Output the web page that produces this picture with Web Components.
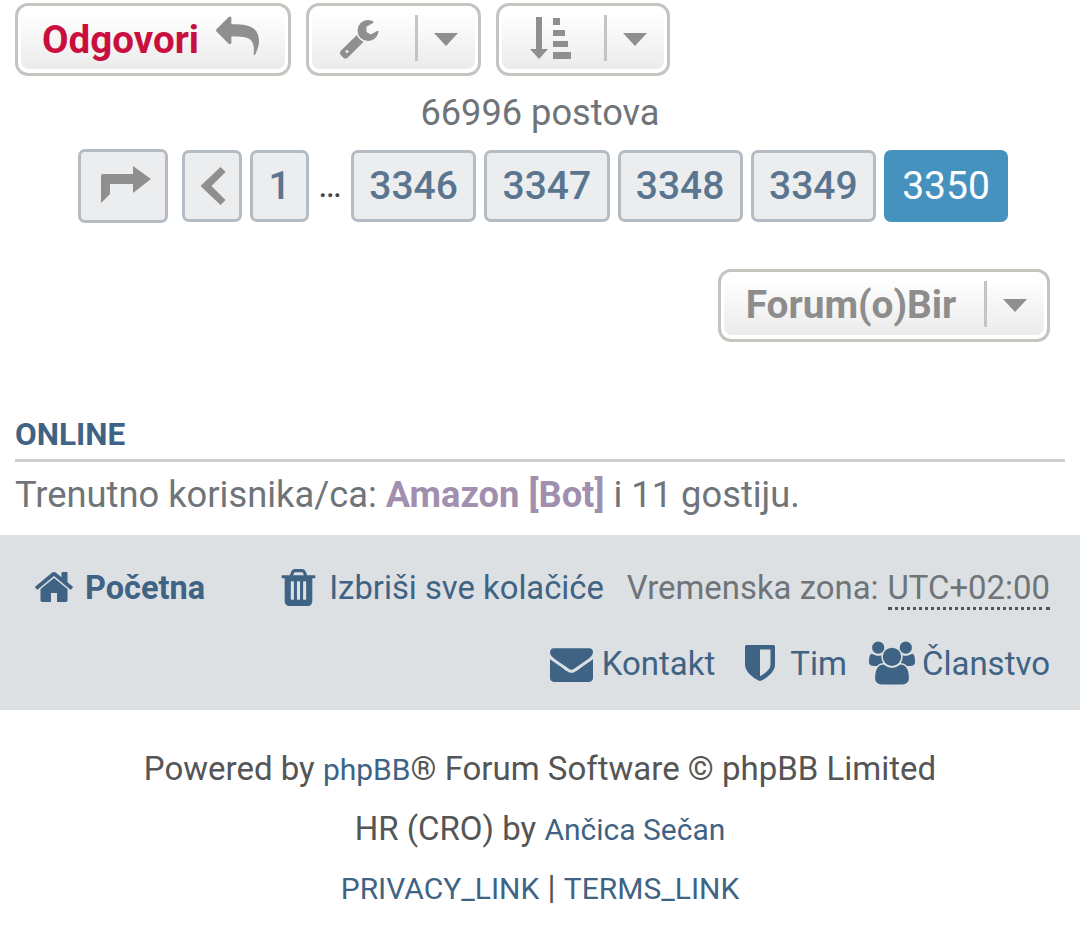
<!DOCTYPE html>
<html lang="hr">
<head>
<meta charset="utf-8">
<title>Forum</title>
<style>
  html, body { margin: 0; background: #fff; }
  body { font-family: Roboto, "Liberation Sans", sans-serif; color: #6b7280; width: 1080px; height: 946px; overflow: hidden; }
</style>
</head>
<body>
<topic-page>
  <action-bar>
    <forum-button style="width:276px" wide>
      <span style="color:#c90f3e;font-weight:700;font-size:38.5px;margin-left:1px">Odgovori</span>
      <fa-icon name="reply" size="43" style="margin-left:17px;margin-top:-6px"></fa-icon>
    </forum-button>
    <forum-button style="width:175px" caret>
      <fa-icon name="wrench" size="42" style="margin:-3px 0 0 -4px"></fa-icon>
    </forum-button>
    <forum-button style="width:174px" caret>
      <fa-icon name="sort" size="44" style="margin:-4px 0 0 -2px"></fa-icon>
    </forum-button>
  </action-bar>

  <post-count>66996 postova</post-count>

  <page-nav>
    <page-link jump><fa-icon name="jump" size="50" style="margin:-3px 0 0 5px"></fa-icon></page-link>
    <page-link icon><fa-icon name="prev" size="38" style="margin-left:1px"></fa-icon></page-link>
    <page-link small>1</page-link>
    <page-dots>…</page-dots>
    <page-link>3346</page-link>
    <page-link>3347</page-link>
    <page-link>3348</page-link>
    <page-link>3349</page-link>
    <page-link active>3350</page-link>
  </page-nav>

  <jump-row>
    <forum-button style="width:332px" caret tight>
      <span style="color:#8d8d8d;font-weight:700;font-size:38.8px">Forum(o)Bir</span>
    </forum-button>
  </jump-row>

  <online-box heading="ONLINE">
    Trenutno korisnika/ca: <b>Amazon [Bot]</b> i 11 gostiju.
  </online-box>

  <nav-footer>
    <foot-link slot="left" icon="home" strong>Početna</foot-link>
    <foot-link slot="left" icon="trash" style="margin-left:72px">Izbriši sve kolačiće</foot-link>
    <time-zone slot="left"></time-zone>
    <foot-link slot="right" icon="envelope" style="font-size:33px">Kontakt</foot-link>
    <foot-link slot="right" icon="shield" style="font-size:33px">Tim</foot-link>
    <foot-link slot="right" icon="group" style="font-size:33px;margin-left:-2px">Članstvo</foot-link>
  </nav-footer>

  <copy-right></copy-right>
</topic-page>

<script>
const ICONS = {
  reply: ['0 0 1792 1792', 'M1792 1120q0 166-127 451-3 7-10.5 24t-13.5 30-13 22q-12 17-28 17-15 0-23.5-10t-8.5-25q0-9 2.5-26.5t2.5-23.5q5-68 5-123 0-101-17.5-181t-48.5-138.5-80-101-105.5-69.5-133-42.5-154-21.5-175.5-6h-224v256q0 26-19 45t-45 19-45-19l-512-512q-19-19-19-45t19-45l512-512q19-19 45-19t45 19 19 45v256h224q713 0 875 403 53 134 53 333z'],
  wrench: ['0 0 1792 1792', 'M448 1472q0-26-19-45t-45-19-45 19-19 45 19 45 45 19 45-19 19-45zm644-420l-682 682q-37 37-90 37-52 0-91-37l-106-108q-38-36-38-90 0-53 38-91l681-681q39 98 114.5 173.5t173.5 114.5zm634-435q0 39-23 106-47 134-164.5 217.5t-258.5 83.5q-185 0-316.5-131.5t-131.5-316.5 131.5-316.5 316.5-131.5q58 0 121.5 16.5t107.5 46.5q16 11 16 28t-16 28l-293 169v224l193 107q5-3 79-48.5t135.5-81 70.5-35.5q15 0 23.5 10t8.5 25z'],
  sort: ['0 0 44 44', 'M9 1h6v32h6l-9 10-9-10h6zM26 2h7v7h-7zM26 14h12v6H26zM26 25h15v6H26zM26 36h19v7H26z'],
  jump: ['0 0 50 50', 'M0 43V16q0-2 2-2h30V6l18 13-18 14v-9H9v10z'],
  prev: ['0 0 25 38', 'M20 0l5 5-14 14 14 14-5 5L0 19z'],
  home: ['0 0 1792 1792', 'M1472 992v480q0 26-19 45t-45 19h-384v-384h-256v384h-384q-26 0-45-19t-19-45v-480q0-1 .5-3t.5-3l575-474 575 474q1 2 1 6zm223-69l-62 74q-8 9-21 11h-3q-13 0-21-7l-692-577-692 577q-12 8-24 7-13-2-21-11l-62-74q-8-10-7-23.5t11-21.5l719-599q32-26 76-26t76 26l244 204v-195q0-14 9-23t23-9h192q14 0 23 9t9 23v408l219 182q10 8 11 21.5t-7 23.5z'],
  trash: ['0 0 1792 1792', 'M704 1376v-704q0-14-9-23t-23-9h-64q-14 0-23 9t-9 23v704q0 14 9 23t23 9h64q14 0 23-9t9-23zm256 0v-704q0-14-9-23t-23-9h-64q-14 0-23 9t-9 23v704q0 14 9 23t23 9h64q14 0 23-9t9-23zm256 0v-704q0-14-9-23t-23-9h-64q-14 0-23 9t-9 23v704q0 14 9 23t23 9h64q14 0 23-9t9-23zm-544-992h448l-48-117q-7-9-17-11h-317q-10 2-17 11zm928 32v64q0 14-9 23t-23 9h-96v948q0 83-47 143.5t-113 60.5h-832q-66 0-113-58.5t-47-141.5v-952h-96q-14 0-23-9t-9-23v-64q0-14 9-23t23-9h309l70-167q15-37 54-63t79-26h320q40 0 79 26t54 63l70 167h309q14 0 23 9t9 23z'],
  envelope: ['0 0 1792 1792', 'M1792 710v794q0 66-47 113t-113 47h-1472q-66 0-113-47t-47-113v-794q44 49 101 87 362 246 497 345 57 42 92.5 65.5t94.5 48 110 24.5h2q51 0 110-24.5t94.5-48 92.5-65.5q170-123 498-345 57-39 100-87zm0-294q0 79-49 151t-122 123q-376 261-468 325-10 7-42.5 30.5t-54 38-52 32.5-57.5 27-50 9h-2q-23 0-50-9t-57.5-27-52-32.5-54-38-42.5-30.5q-91-64-262-182.5t-205-142.5q-62-42-117-115.5t-55-136.5q0-78 41.5-130t118.5-52h1472q65 0 112.5 47t47.5 113z'],
  shield: ['0 0 1792 1792', 'M1344 960v-640h-448v1137q119-63 213-137 235-184 235-360zm192-768v768q0 86-33.5 170.5t-83 150-118 127.5-126.5 103-121 77.5-89.5 49.5-42.5 20q-12 6-26 6t-26-6q-16-7-42.5-20t-89.5-49.5-121-77.5-126.5-103-118-127.5-83-150-33.5-170.5v-768q0-26 19-45t45-19h1152q26 0 45 19t19 45z'],
  group: ['0 0 1920 1792', 'M593 896q-162 5-265 128h-134q-82 0-138-40.5t-56-118.5q0-353 124-353 6 0 43.5 21t97.5 42.5 119 21.5q67 0 133-23-5 37-5 66 0 139 81 256zm1071 637q0 120-73 189.5t-194 69.5h-874q-121 0-194-69.5t-73-189.5q0-53 3.5-103.5t14-109 26.5-108.5 43-97.5 62-81 85.5-53.5 111.5-20q10 0 43 21.5t73 48 107 48 135 21.5 135-21.5 107-48 73-48 43-21.5q61 0 111.5 20t85.5 53.5 62 81 43 97.5 26.5 108.5 14 109 3.5 103.5zm-1024-1277q0 106-75 181t-181 75-181-75-75-181 75-181 181-75 181 75 75 181zm704 384q0 159-112.5 271.5t-271.5 112.5-271.5-112.5-112.5-271.5 112.5-271.5 271.5-112.5 271.5 112.5 112.5 271.5zm576 225q0 78-56 118.5t-138 40.5h-134q-103-123-265-128 81-117 81-256 0-29-5-66 66 23 133 23 59 0 119-21.5t97.5-42.5 43.5-21q124 0 124 353zm-128-609q0 106-75 181t-181 75-181-75-75-181 75-181 181-75 181 75 75 181z']
};

// small helper, every element here is just a shadow root with a style + markup
function defineEl(tag, html) {
  customElements.define(tag, class extends HTMLElement {
    constructor() {
      super();
      this.attachShadow({ mode: 'open' });
    }
    connectedCallback() {
      this.shadowRoot.innerHTML = typeof html === 'function' ? html(this) : html;
    }
  });
}

defineEl('fa-icon', el => {
  const [box, d] = ICONS[el.getAttribute('name')];
  const size = el.getAttribute('size') || 32;
  return `
    <style>
      :host { display: inline-flex; flex: none; color: inherit; }
      svg { display: block; fill: currentColor; }
    </style>
    <svg width="${size}" height="${size}" viewBox="${box}"><path d="${d}"/></svg>`;
});

defineEl('topic-page', `
  <style>:host { display: block; }</style>
  <slot></slot>`);

defineEl('action-bar', `
  <style>
    :host { display: flex; gap: 15px; padding: 3px 15px 0; color: #8f8f8f; }
  </style>
  <slot></slot>`);

defineEl('forum-button', el => `
  <style>
    :host {
      display: flex; box-sizing: border-box; height: 73px;
      border: 3px solid #c7c3bf; border-radius: 13px;
      background: #fff; padding: 0 3px 4px;
      color: #8f8f8f;
    }
    .face {
      flex: 1; display: flex; align-items: center; justify-content: center;
      border-radius: 8px;
      background: linear-gradient(#fff 10%, #ebebeb);
      min-width: 0;
    }
    .main { flex: 1; display: flex; align-items: center; justify-content: center; padding: ${el.hasAttribute('tight') ? 2 : 4}px 6px 0 0; }
    .sep { width: 3px; height: 46px; background: #c7c3bf; flex: none; }
    .caret { box-sizing: border-box; width: 57px; flex: none; display: flex; justify-content: center; padding: 3px 2px 0 0; }
    .caret i { width: 0; height: 0; border: 12px solid transparent; border-top: 13px solid #8f8f8f; border-bottom: 0; }
  </style>
  <div class="face">
    <div class="main"><slot></slot></div>
    ${el.hasAttribute('caret') ? '<div class="sep"></div><div class="caret"><i></i></div>' : ''}
  </div>`);

defineEl('post-count', `
  <style>
    :host { display: block; text-align: center; font-size: 36.2px; line-height: 42px; margin-top: 16px; color: #6f7479; }
  </style>
  <slot></slot>`);

defineEl('page-nav', `
  <style>
    :host { display: flex; justify-content: center; align-items: center; gap: 8px; margin-top: 15px; padding-left: 6px; height: 74px; }
  </style>
  <slot></slot>`);

defineEl('page-dots', `
  <style>
    :host { display: block; width: 26px; text-align: center; color: #444; font-size: 35px; line-height: 40px; }
  </style>
  <slot></slot>`);

defineEl('page-link', el => {
  const active = el.hasAttribute('active');
  const jump = el.hasAttribute('jump');
  const icon = el.hasAttribute('icon');
  const small = el.hasAttribute('small');
  let w = active ? 124 : 125.25;
  if (small) w = 59;
  if (icon) w = 60;
  if (jump) w = 90;
  return `
  <style>
    :host {
      display: flex; align-items: center; justify-content: center; box-sizing: border-box; flex: none;
      width: ${w}px; height: ${jump ? 74 : 72}px;
      ${jump ? 'margin-right: 6px;' : ''}
      border: 3px solid ${active ? '#4692bf' : '#b4bbc2'}; border-radius: 7px;
      background: ${active ? '#4692bf' : '#ecedee'};
      color: ${active ? '#fff' : (jump || icon ? '#8f8f8f' : '#5a7590')};
      font-size: 39px; font-weight: ${active ? 400 : 500};
    }
  </style>
  <slot></slot>`;
});

defineEl('jump-row', `
  <style>:host { display: flex; justify-content: flex-end; padding: 0 30px; margin-top: 46px; }</style>
  <slot></slot>`);

defineEl('online-box', el => `
  <style>
    :host { display: block; padding: 0 15px; margin-top: 71px; }
    h3 { margin: 0; font-size: 31.5px; line-height: 40px; font-weight: 700; color: #3f6384; border-bottom: 3px solid #cfcfcf; padding: 2px 0 4px; }
    p { margin: 11px 0 0; font-size: 36.3px; line-height: 44px; color: #6f7479; height: 62px; }
    ::slotted(b) { color: #a08fae; }
  </style>
  <h3>${el.getAttribute('heading')}</h3>
  <p><slot></slot></p>`);

defineEl('nav-footer', `
  <style>
    :host { display: flex; flex-direction: column; box-sizing: border-box; height: 175px; background: #dde0e3; padding: 30px 30px 0 33px; }
    .row { display: flex; align-items: center; height: 46px; }
    .right { justify-content: flex-end; gap: 24px; margin-top: 30px; }
  </style>
  <div class="row left"><slot name="left"></slot></div>
  <div class="row right"><slot name="right"></slot></div>`);

defineEl('foot-link', el => {
  const name = el.getAttribute('icon');
  const sizes = { home: 42, trash: 43, envelope: 43, shield: 42, group: 46 };
  const gaps = { home: 10, trash: 9, envelope: 9, shield: 9, group: 7 };
  return `
  <style>
    :host { display: inline-flex; align-items: center; gap: ${gaps[name]}px; color: #3f6384; font-size: ${el.hasAttribute('strong') ? 32.5 : 32.8}px; font-weight: ${el.hasAttribute('strong') ? 700 : 400}; line-height: 46px; white-space: nowrap; }
    fa-icon { margin-top: -2px; }
  </style>
  <fa-icon name="${name}" size="${sizes[name]}"></fa-icon><span><slot></slot></span>`;
});

defineEl('time-zone', `
  <style>
    :host { display: inline-flex; gap: 9px; margin-left: auto; color: #6f7479; font-size: 32.9px; line-height: 46px; white-space: nowrap; }
    span { border-bottom: 3px dotted #4b5563; line-height: 46px; height: 42px; }
  </style>
  Vremenska zona: <span>UTC+02:00</span>`);

defineEl('copy-right', `
  <style>
    :host { display: block; text-align: center; font-size: 33px; line-height: 60px; color: #555; margin-top: 29px; }
    div { height: 60px; }
    div:last-child { line-height: 58px; }
    a { color: #3f6384; font-size: 30px; text-decoration: none; }
  </style>
  <div>Powered by <a href="#">phpBB</a>® Forum Software © phpBB Limited</div>
  <div>HR (CRO) by <a href="#">Ančica Sečan</a></div>
  <div><a href="#">PRIVACY_LINK</a> | <a href="#">TERMS_LINK</a></div>`);
</script>
</body>
</html>
